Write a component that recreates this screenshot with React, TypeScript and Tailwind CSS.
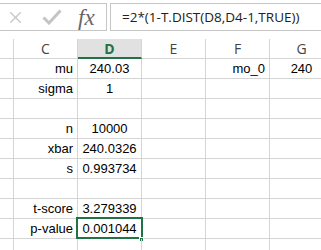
import { X } from 'lucide-react';

const cols = ['C', 'D', 'E', 'F', 'G'];

type Row = { c?: string; d?: string; f?: string; g?: string; selected?: boolean };

const rows: Row[] = [
  { c: 'mu', d: '240.03', f: 'mo_0', g: '240' },
  { c: 'sigma', d: '1' },
  {},
  { c: 'n', d: '10000' },
  { c: 'xbar', d: '240.0326' },
  { c: 's', d: '0.993734' },
  {},
  { c: 't-score', d: '3.279339' },
  { c: 'p-value', d: '0.001044', selected: true },
  {},
];

const grid = 'grid grid-cols-[14px_64px_64px_64px_64px_64px]';

function CheckMark() {
  return (
    <svg width="20" height="16" viewBox="0 0 20 16" fill="none">
      <path d="M1.5 8.5 L7 14 L18.5 1.5" stroke="#c4c4c4" strokeWidth="3" />
    </svg>
  );
}

export default function App() {
  return (
    <div className="h-[250px] w-[321px] overflow-hidden bg-white font-['Liberation_Sans',sans-serif] text-[13px] text-black">
      {/* formula bar */}
      <div className="flex h-[39px] items-start pt-[3px]">
        <div className="flex h-[28px] w-[107px] items-center border-y border-r border-[#c6c6c6]">
          <X className="ml-[6px] h-[19px] w-[19px] text-[#c4c4c4]" strokeWidth={1.6} />
          <span className="ml-[17px]">
            <CheckMark />
          </span>
          <span className="ml-[16px] font-['Liberation_Serif',serif] text-[23px] italic leading-none text-[#666]">
            fx
          </span>
        </div>
        <div className="ml-[3px] flex h-[28px] flex-1 items-center border border-r-0 border-[#c6c6c6] pl-[11px] font-['Open_Sans',sans-serif] text-[13.5px] text-[#222]">
          =2*(1-T.DIST(D8,D4-1,TRUE))
        </div>
      </div>

      {/* column headers */}
      <div className={grid}>
        <div className="h-[20px] border-r border-b border-[#d4d4d4]" />
        {cols.map((c) => (
          <div
            key={c}
            className={
              c === 'D'
                ? 'flex h-[20px] items-center justify-center border-r border-b-2 border-r-[#d4d4d4] border-b-[#217346] bg-[#e1e1e1] pt-[1px] font-["Open_Sans",sans-serif] text-[14px] font-bold text-[#217346]'
                : 'flex h-[20px] items-center justify-center border-r border-b border-[#d4d4d4] font-["Open_Sans",sans-serif] text-[14px] text-[#444]'
            }
          >
            {c}
          </div>
        ))}
      </div>

      {/* cells */}
      {rows.map((r, i) => (
        <div key={i} className={grid}>
          <div className="h-[20px] border-r border-b border-[#d4d4d4]" />
          <div className="flex h-[20px] items-center justify-end border-r border-b border-[#d4d4d4] pr-[4px]">{r.c}</div>
          <div className="relative flex h-[20px] items-center justify-center border-r border-b border-[#d4d4d4]">
            {r.d}
            {r.selected && (
              <>
                <div className="absolute -top-[2px] -left-[2px] h-[22px] w-[67px] border-2 border-[#217346]" />
                <div className="absolute -right-[3px] -bottom-[4px] h-[5px] w-[5px] border border-white bg-[#217346]" />
              </>
            )}
          </div>
          <div className="h-[20px] border-r border-b border-[#d4d4d4]" />
          <div className="flex h-[20px] items-center justify-end border-r border-b border-[#d4d4d4] pr-[4px]">{r.f}</div>
          <div className="flex h-[20px] items-center justify-center border-r border-b border-[#d4d4d4]">{r.g}</div>
        </div>
      ))}
    </div>
  );
}
